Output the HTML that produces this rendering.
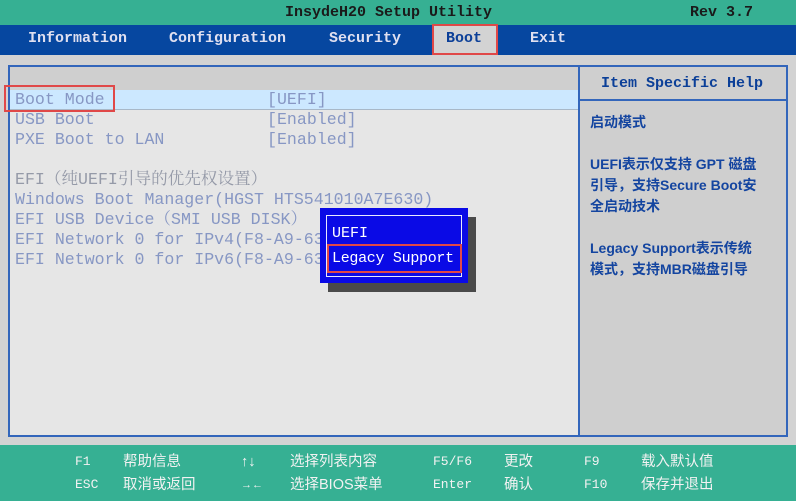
<!DOCTYPE html>
<html><head><meta charset="utf-8"><style>
*{margin:0;padding:0;box-sizing:border-box}
body{width:796px;height:501px;overflow:hidden;background:#d3d3d3;position:relative;font-family:"Liberation Mono","Noto Serif CJK SC",monospace}
.a{position:absolute;white-space:nowrap;line-height:20px}
.top{left:0;top:0;width:796px;height:25px;background:#36b093}
.nav{left:0;top:25px;width:796px;height:30px;background:#0647a0}
.tb{font-weight:bold;font-size:15px;color:#1a1a1a;top:3px}
.nv{font-weight:bold;font-size:15px;color:#e0e0f0;top:29px}
.main{left:8px;top:65px;width:571px;height:372px;background:#e6e6e6;border:2px solid #3366bb;border-right:none}
.hdr{left:10px;top:67px;width:568px;height:23px;background:#cfcfcf}
.hl{left:10px;top:90px;width:568px;height:20px;background:#cce8ff;border-bottom:1px solid #a8b8c8}
.right{left:578px;top:65px;width:210px;height:372px;background:#cfcfcf;border:2px solid #3366bb}
.it{font-size:16.6px;color:#8797c4;font-family:"Liberation Mono","Noto Serif CJK SC",monospace;height:20px}
.help{font-family:"Liberation Sans","Noto Sans CJK SC",sans-serif;font-weight:bold;font-size:14px;color:#1445a0;left:590px}
.foot{left:0;top:445px;width:796px;height:56px;background:#36b093}
.ft{font-family:"Liberation Sans","Noto Sans CJK SC",sans-serif;font-size:14.5px;color:#f2f2f2}
.k{font-family:"Liberation Mono",monospace;font-size:13px}
</style></head><body>
<div class="a top"></div>
<div class="a tb" style="left:285px">InsydeH20 Setup Utility</div>
<div class="a tb" style="left:690px">Rev 3.7</div>
<div class="a nav"></div>
<div class="a" style="left:432px;top:24px;width:66px;height:31px;background:#d3d3d3;border:2px solid #e04848"></div>
<div class="a nv" style="left:28px">Information</div>
<div class="a nv" style="left:169px">Configuration</div>
<div class="a nv" style="left:329px">Security</div>
<div class="a nv" style="left:446px;color:#0b3f98">Boot</div>
<div class="a nv" style="left:530px">Exit</div>

<div class="a main"></div>
<div class="a hdr"></div>
<div class="a hl"></div>
<div class="a right"></div>
<div class="a" style="left:580px;top:99px;width:206px;height:2px;background:#3366bb"></div>
<div class="a" style="left:601px;top:74px;font-weight:bold;font-size:15px;color:#0b3f98">Item Specific Help</div>

<div class="a" style="left:4px;top:85px;width:111px;height:27px;border:2px solid #e04848"></div>
<div class="a it" style="left:15px;top:90px">Boot Mode</div>
<div class="a it" style="left:267px;top:90px">[UEFI]</div>
<div class="a it" style="left:15px;top:110px">USB Boot</div>
<div class="a it" style="left:267px;top:110px">[Enabled]</div>
<div class="a it" style="left:15px;top:130px">PXE Boot to LAN</div>
<div class="a it" style="left:267px;top:130px">[Enabled]</div>
<div class="a it" style="left:15px;top:170px;color:#959aa8">EFI（纯UEFI引导的优先权设置）</div>
<div class="a it" style="left:15px;top:190px">Windows Boot Manager(HGST HTS541010A7E630)</div>
<div class="a it" style="left:15px;top:210px">EFI USB Device（SMI USB DISK）</div>
<div class="a it" style="left:15px;top:230px">EFI Network 0 for IPv4(F8-A9-63</div>
<div class="a it" style="left:15px;top:250px">EFI Network 0 for IPv6(F8-A9-63</div>

<div class="a" style="left:328px;top:217px;width:148px;height:75px;background:#4a4a4a"></div>
<div class="a" style="left:320px;top:208px;width:148px;height:75px;background:#0a0ae6"></div>
<div class="a" style="left:326px;top:215px;width:136px;height:62px;border:1px solid #e8e8ff"></div>
<div class="a" style="left:327px;top:244px;width:135px;height:29px;border:2px solid #e04848"></div>
<div class="a it" style="left:332px;top:224px;color:#fff;font-size:15px">UEFI</div>
<div class="a it" style="left:332px;top:249px;color:#fff;font-size:15px;letter-spacing:-0.3px">Legacy Support</div>

<div class="a help" style="top:112px">启动模式</div>
<div class="a help" style="top:154px">UEFI表示仅支持 GPT 磁盘</div>
<div class="a help" style="top:175px">引导，支持Secure Boot安</div>
<div class="a help" style="top:196px">全启动技术</div>
<div class="a help" style="top:238px">Legacy Support表示传统</div>
<div class="a help" style="top:259px">模式，支持MBR磁盘引导</div>

<div class="a foot"></div>
<div class="a ft k" style="left:75px;top:452px">F1</div>
<div class="a ft" style="left:123px;top:452px">帮助信息</div>
<div class="a ft" style="left:241px;top:452px">↑↓</div>
<div class="a ft" style="left:290px;top:452px">选择列表内容</div>
<div class="a ft k" style="left:433px;top:452px">F5/F6</div>
<div class="a ft" style="left:504px;top:452px">更改</div>
<div class="a ft k" style="left:584px;top:452px">F9</div>
<div class="a ft" style="left:641px;top:452px">载入默认值</div>
<div class="a ft k" style="left:75px;top:475px">ESC</div>
<div class="a ft" style="left:123px;top:475px">取消或返回</div>
<div class="a ft" style="left:241px;top:475px;font-size:11px">→←</div>
<div class="a ft" style="left:290px;top:475px">选择BIOS菜单</div>
<div class="a ft k" style="left:433px;top:475px">Enter</div>
<div class="a ft" style="left:504px;top:475px">确认</div>
<div class="a ft k" style="left:584px;top:475px">F10</div>
<div class="a ft" style="left:641px;top:475px">保存并退出</div>
</body></html>
